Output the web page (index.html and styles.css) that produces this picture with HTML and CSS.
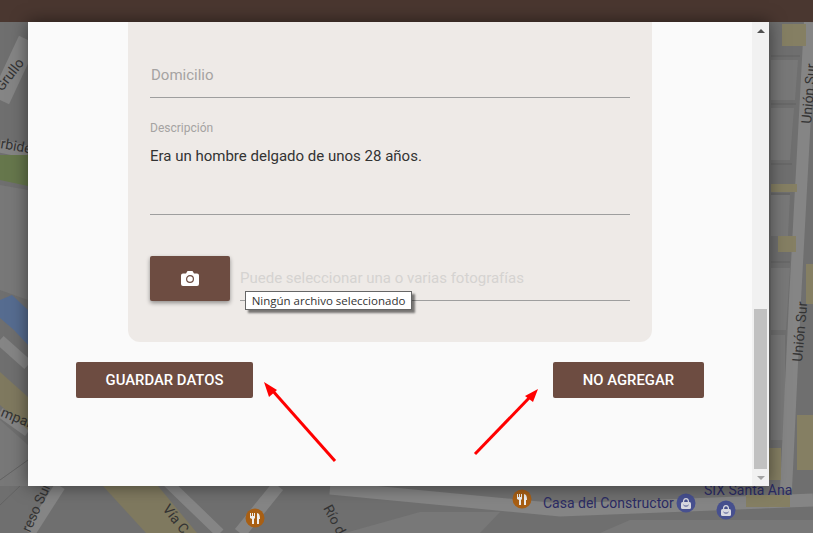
FILE: index.html
```html
<!DOCTYPE html>
<html lang="en">
  <head>
    <meta charset="UTF-8" />
    <title>Agregar persona</title>
    <link rel="stylesheet" href="styles.css">
  </head>
  <body>
    <div class="topbar"></div>

    <!-- map behind the dialog -->
    <svg class="map" width="813" height="511" viewBox="0 22 813 511">
      <rect x="0" y="22" width="813" height="511" fill="#6f6f6f" />
      <!-- blocks -->
      <g fill="#787878">
        <path d="M0 185L28 190V300L0 290Z" />
        <path d="M0 420L28 445V486H0Z" />
        <path d="M771 60H798L795 100H771Z" />
        <path d="M771 108H794L790 160H771Z" />
        <path d="M771 195H790L788 236H771Z" />
        <path d="M771 268H790L786 330H771Z" />
        <path d="M771 335H785V440H771Z" />
        <path d="M345 533L420 512H500L480 533Z" />
        <path d="M600 533L630 520H813V533Z" />
      </g>
      <!-- roads -->
      <g fill="none" stroke="#858585">
        <path d="M0 100L28 40" stroke-width="20" />
        <path d="M0 146L28 152" stroke-width="13" />
        <path d="M810 22L795 300L786 490" stroke-width="12" />
        <path d="M330 488L560 510L813 500" stroke-width="13" />
        <path d="M165 480L220 533" stroke-width="10" />
        <path d="M278 486L240 533" stroke-width="13" />
        <path d="M60 486L30 533" stroke-width="11" />
        <path d="M0 340L28 365" stroke-width="11" />
        <path d="M0 412L28 432" stroke-width="10" />
      </g>
      <path d="M0 372L28 397V430L0 405Z" fill="#7f795f" />
      <path d="M103 486H158L197 533H146Z" fill="#7f795f" />
      <path d="M0 155H28V186L0 180Z" fill="#66774c" />
      <path d="M0 300L12 295L28 310V345L14 330L0 318Z" fill="#566c90" />
      <g fill="#857f63">
        <rect x="782" y="24" width="24" height="22" />
        <rect x="771" y="184" width="26" height="8" />
        <rect x="778" y="236" width="18" height="16" />
        <rect x="806" y="264" width="7" height="40" />
        <rect x="797" y="415" width="16" height="55" />
        <rect x="769" y="448" width="12" height="32" />
        <rect x="746" y="495" width="44" height="12" />
      </g>
      <g fill="none" stroke="#636363">
        <path d="M771 56H800M771 104H796M771 164H792M771 194H790M771 262H790" />
        <path d="M0 480L28 460M20 486L0 505" />
      </g>

      <!-- street names -->
      <g class="street">
        <text transform="translate(2 92) rotate(-52)">Grullo</text>
        <text transform="translate(0 148) rotate(10)">rbide</text>
        <text transform="translate(0 416) rotate(22)">mpan</text>
        <text transform="translate(30 533) rotate(-66)">reso Sur</text>
        <text transform="translate(162 509) rotate(52)">Vía C</text>
        <text transform="translate(323 508) rotate(62)">Río d</text>
        <text transform="translate(811 124) rotate(-85)">Unión Sur</text>
        <text transform="translate(802 362) rotate(-85)">Unión Sur</text>
      </g>
      <g class="place">
        <text x="543" y="508">Casa del Constructor</text>
        <text x="704" y="495">SIX Santa Ana</text>
      </g>

      <!-- restaurant pins -->
      <g>
        <circle cx="522" cy="499" r="9.500" fill="#a85f14" />
        <path d="M517 494h1v3h1v-3h1v3h1v-3h1v5l-1 1v5h-2v-5l-2-1Z" fill="#eee" />
        <path d="M524 494c2 0 3 2 3 6h-1v5h-2Z" fill="#eee" />
        <circle cx="255" cy="518" r="9.500" fill="#a85f14" />
        <path d="M250 513h1v3h1v-3h1v3h1v-3h1v5l-1 1v5h-2v-5l-2-1Z" fill="#eee" />
        <path d="M257 513c2 0 3 2 3 6h-1v5h-2Z" fill="#eee" />
      </g>
      <!-- shop pins -->
      <g>
        <circle cx="686" cy="503" r="9.500" fill="#47508f" />
        <rect x="681" y="502" width="10" height="7" rx="1.500" fill="#d8d8e0" />
        <path d="M683.500 502c0-4.500 5-4.500 5 0" fill="none" stroke="#d8d8e0" stroke-width="1.200" />
        <path d="M683.500 505c1 1.500 4 1.500 5 0" fill="none" stroke="#47508f" />
        <circle cx="726" cy="510" r="9.500" fill="#47508f" />
        <rect x="721" y="509" width="10" height="7" rx="1.500" fill="#d8d8e0" />
        <path d="M723.500 509c0-4.500 5-4.500 5 0" fill="none" stroke="#d8d8e0" stroke-width="1.200" />
        <path d="M723.500 512c1 1.500 4 1.500 5 0" fill="none" stroke="#47508f" />
      </g>
    </svg>

    <div class="modal">
      <div class="modal-body">
        <div class="panel">
          <div class="field field-address">
            <span class="placeholder">Domicilio</span>
          </div>
          <div class="field field-desc">
            <span class="field-label">Descripción</span>
            <p class="field-value">Era un hombre delgado de unos 28 años.</p>
          </div>
          <div class="file-row">
            <button class="file-btn" type="button">
              <svg width="18" height="15" viewBox="0 0 18 15">
                <path d="M2 2.500h3l1.500-2.500h5L13 2.500h3a2 2 0 0 1 2 2V13a2 2 0 0 1-2 2H2a2 2 0 0 1-2-2V4.500a2 2 0 0 1 2-2Z" fill="#fff" />
                <circle cx="9" cy="8" r="3.400" fill="none" stroke="#6d4c41" stroke-width="1.200" />
              </svg>
            </button>
            <div class="file-text">Puede seleccionar una o varias fotografías</div>
            <div class="tooltip">Ningún archivo seleccionado</div>
          </div>
        </div>
        <div class="actions">
          <button class="btn btn-save" type="button">GUARDAR DATOS</button>
          <button class="btn btn-cancel" type="button">NO AGREGAR</button>
        </div>
      </div>
      <div class="scrollbar">
        <span class="arrow-up"></span>
        <div class="thumb"></div>
        <span class="arrow-down"></span>
      </div>
    </div>

    <!-- hand drawn arrows on top of the screenshot -->
    <svg class="arrows" width="813" height="533" viewBox="0 0 813 533">
      <path d="M335 461L272 390" stroke="#f00" stroke-width="3" fill="none" />
      <path d="M264 382L277 390L269 397Z" fill="#f00" />
      <path d="M475 454L530 397" stroke="#f00" stroke-width="3" fill="none" />
      <path d="M538 389L533 402L525 396Z" fill="#f00" />
    </svg>
  </body>
</html>
```

FILE: styles.css
```css
html,
body {
  margin: 0;
  height: 533px;
  overflow: hidden;
}
body {
  font-family: Roboto, sans-serif;
  background-color: #6f6f6f;
}
.topbar {
  height: 22px;
  background-color: #4a3730;
}
.map {
  position: absolute;
  left: 0;
  top: 22px;
}
.street text {
  font-family: Roboto, sans-serif;
  font-size: 14px;
  fill: #333;
}
.place text {
  font-family: Roboto, sans-serif;
  font-size: 14px;
  fill: #2b2b63;
}

/* dialog */
.modal {
  position: absolute;
  left: 28px;
  top: 22px;
  width: 741px;
  height: 464px;
  display: flex;
  background-color: #fafafa;
  box-shadow: 0 0 16px rgba(0, 0, 0, 0.5);
}
.modal-body {
  flex: 1;
  display: flex;
  flex-direction: column;
}
.panel {
  margin-left: 100px;
  width: 524px;
  height: 320px;
  padding: 0 22px;
  box-sizing: border-box;
  background-color: #eeeae7;
  border-radius: 0 0 12px 12px;
}
.field {
  box-sizing: border-box;
  border-bottom: 1px solid #9e9e9e;
}
.field-address {
  height: 76px;
  padding-top: 43px;
}
.placeholder {
  font-size: 15px;
  line-height: 20px;
  color: #a5a3a2;
  display: block;
  padding-left: 1px;
}
.field-desc {
  margin-top: 22px;
  height: 95px;
}
.field-label {
  display: block;
  font-size: 12px;
  line-height: 16px;
  color: #a5a3a2;
}
.field-value {
  margin: 10px 0 0;
  font-size: 15px;
  line-height: 20px;
  color: #333;
}
.file-row {
  position: relative;
  margin-top: 41px;
  display: flex;
  height: 46px;
}
.file-btn {
  width: 80px;
  height: 45px;
  padding: 0;
  border: none;
  border-radius: 2px;
  background-color: #6d4c41;
  box-shadow: 0 2px 4px rgba(0, 0, 0, 0.4);
  display: flex;
  align-items: center;
  justify-content: center;
}
.file-text {
  flex: 1;
  margin-left: 10px;
  height: 45px;
  box-sizing: border-box;
  padding-top: 12px;
  font-size: 15px;
  line-height: 20px;
  color: #d5d3d1;
  border-bottom: 1px solid #9e9e9e;
}
.tooltip {
  position: absolute;
  left: 95px;
  top: 35px;
  width: 167px;
  height: 19px;
  box-sizing: border-box;
  border: 1px solid #666;
  background-color: #fff;
  box-shadow: 3px 3px 2px rgba(0, 0, 0, 0.5);
  font-family: "Open Sans", sans-serif;
  font-size: 11.500px;
  line-height: 17px;
  text-align: center;
  color: #333;
  white-space: nowrap;
}
.actions {
  display: flex;
  justify-content: space-between;
  padding: 20px 48px 0;
}
.btn {
  height: 36px;
  padding: 0;
  border: none;
  border-radius: 2px;
  background-color: #6d4c41;
  color: #fff;
  font-family: Roboto, sans-serif;
  font-size: 14.850px;
  font-weight: 500;
}
.btn-save {
  width: 177px;
}
.btn-cancel {
  width: 151px;
}

/* scrollbar */
.scrollbar {
  position: relative;
  width: 17px;
  background-color: #f1f1f1;
}
.thumb {
  position: absolute;
  left: 2px;
  right: 2px;
  top: 287px;
  height: 160px;
  background-color: #c1c1c1;
}
.arrow-up,
.arrow-down {
  position: absolute;
  left: 5px;
  border-left: 4px solid transparent;
  border-right: 4px solid transparent;
}
.arrow-up {
  top: 7px;
  border-bottom: 4px solid #505050;
}
.arrow-down {
  bottom: 6px;
  border-top: 4px solid #a3a3a3;
}

.arrows {
  position: absolute;
  left: 0;
  top: 0;
  pointer-events: none;
}
```
